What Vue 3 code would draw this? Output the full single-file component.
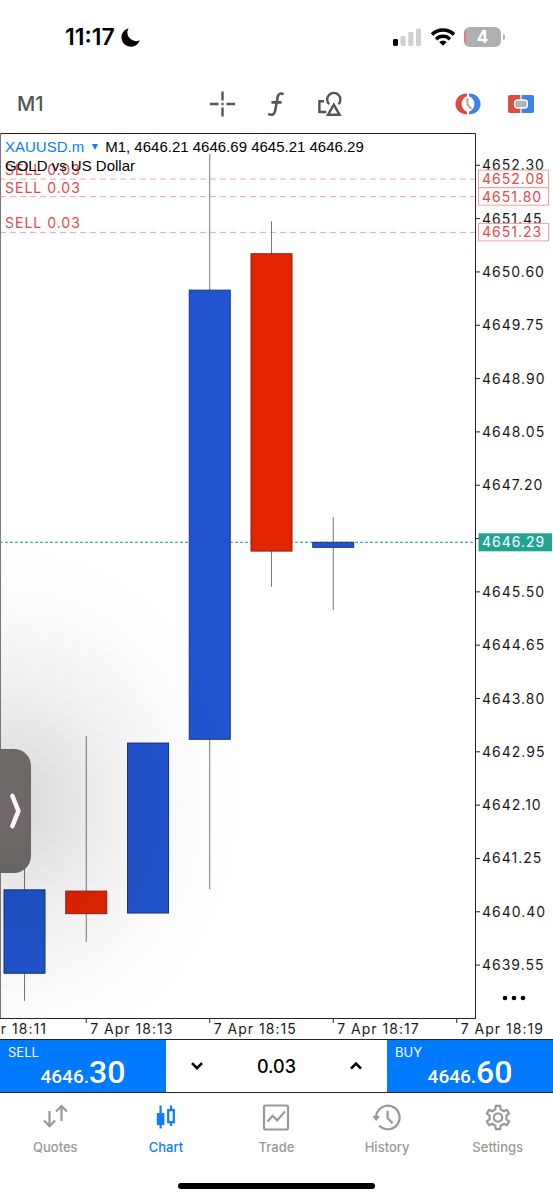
<template>
  <div class="app">
    <div class="status">
      <div class="status-left">
        <span class="clock">11:17</span>
        <svg class="moon" viewBox="0 0 20 20" aria-hidden="true">
          <path d="M7.6 1.2A9.4 9.4 0 1 0 18.8 13.2A8.6 8.6 0 0 1 7.6 1.2Z" fill="#000" />
        </svg>
      </div>
      <div class="status-right">
        <svg class="signal" viewBox="0 0 30 20" aria-hidden="true">
          <rect x="1" y="12" width="5" height="7" rx="1.4" fill="#000" />
          <rect x="8.6" y="9" width="5" height="10" rx="1.4" fill="#d0d0d0" />
          <rect x="16.3" y="5" width="5" height="14" rx="1.4" fill="#d0d0d0" />
          <rect x="24" y="1.5" width="5" height="17.5" rx="1.4" fill="#d0d0d0" />
        </svg>
        <svg class="wifi" viewBox="0 0 26 20" aria-hidden="true">
          <path d="M2 7.6A15.6 15.6 0 0 1 24 7.6" fill="none" stroke="#000" stroke-width="3.6" />
          <path d="M6 12.2A9.8 9.8 0 0 1 20 12.2" fill="none" stroke="#000" stroke-width="3.4" />
          <path d="M13 18.8L9.2 15.1A5.4 5.4 0 0 1 16.8 15.1Z" fill="#000" />
        </svg>
        <div class="battery"><span>4</span></div>
      </div>
    </div>

    <header class="toolbar">
      <button class="timeframe">M1</button>
      <div class="tools">
        <button aria-label="Crosshair">
          <svg viewBox="0 0 26 26" fill="none" stroke="#555" stroke-width="2.4">
            <path d="M13.5 0.5V9.5M13.5 16.5V25.5M1 13H9.5M17.5 13H26M12.4 13H14.6" />
          </svg>
        </button>
        <button aria-label="Indicators">
          <svg viewBox="0 0 26 26" fill="none" stroke="#555" stroke-width="2.6">
            <path d="M20.6 3.2C17.4 1.6 15.3 2.8 14.7 6L12.2 19.6C11.6 23.4 9.2 24.6 5.2 23M8.4 11.4H18.6" />
          </svg>
        </button>
        <button aria-label="Objects">
          <svg viewBox="0 0 26 26" fill="none" stroke="#555" stroke-width="2.4">
            <path d="M7 10.2H2.4V21H9.4" />
            <path d="M12.2 13.2A6.6 6.6 0 1 1 21.4 13.2" />
            <path d="M16.8 13.6L22.6 23.8H11Z" />
          </svg>
        </button>
      </div>
      <div class="actions">
        <button aria-label="Trading session">
          <svg viewBox="0 0 28 24">
            <path d="M13 1.6C-2.4 2-2.4 22 13 22.4V19.8C5.8 17 5.8 7 13 4.2Z" fill="#df4b3e" />
            <path d="M15 1.6C30.4 2 30.4 22 15 22.4V19.8C22.2 17 22.2 7 15 4.2Z" fill="#3b82ee" />
            <path d="M13.4 6.2V12.4L17.6 17" fill="none" stroke="#b3b6b9" stroke-width="2.4" />
          </svg>
        </button>
        <button aria-label="One click trading">
          <svg viewBox="0 0 28 24">
            <path d="M13.4 3H3A2 2 0 0 0 1 5V19A2 2 0 0 0 3 21H13.4Z" fill="#df4b3e" />
            <path d="M14.6 3H25A2 2 0 0 1 27 5V19A2 2 0 0 1 25 21H14.6Z" fill="#3b82ee" />
            <rect x="7.6" y="8" width="12.8" height="8" rx="3" fill="#b3b6b9" stroke="#fff" stroke-width="1.4" />
          </svg>
        </button>
      </div>
    </header>

    <main class="chart">
      <svg class="canvas" viewBox="0 0 553 906" role="img" aria-label="XAUUSD.m M1 candlestick chart">
        <defs>
          <clipPath id="plot"><rect x="0" y="0" width="475" height="885" /></clipPath>
          <radialGradient id="shade">
            <stop offset="0" stop-color="#000" stop-opacity="0.16" />
            <stop offset="0.25" stop-color="#000" stop-opacity="0.1" />
            <stop offset="0.5" stop-color="#000" stop-opacity="0.05" />
            <stop offset="0.75" stop-color="#000" stop-opacity="0.015" />
            <stop offset="1" stop-color="#000" stop-opacity="0" />
          </radialGradient>
        </defs>

        <g v-for="o in orders" :key="o">
          <line class="order-line" x1="0" x2="475" :y1="y(o)" :y2="y(o)" />
          <text class="label order" x="5" :y="y(o) - 4">SELL 0.03</text>
        </g>
        <line class="bid-line" x1="0" x2="475" :y1="y(bid)" :y2="y(bid)" />

        <g v-for="(c, i) in candles" :key="i">
          <line class="wick" :x1="x(i)" :x2="x(i)" :y1="y(c.high)" :y2="y(c.low)" />
          <rect
            :class="c.close >= c.open ? 'up' : 'down'"
            :x="x(i) - 20.5"
            :y="y(Math.max(c.open, c.close))"
            width="41"
            :height="Math.abs(y(c.open) - y(c.close))"
          />
        </g>
        <ellipse cx="10" cy="670" rx="240" ry="265" fill="url(#shade)" clip-path="url(#plot)" />

        <path class="frame" d="M0 0.5H475.5V885" />
        <path class="frame" d="M0 885.5H476" />
        <path class="frame-left" d="M0.5 0V885" />

        <g v-for="p in prices" :key="p">
          <line class="tick" x1="476" x2="480" :y1="y(p)" :y2="y(p)" />
          <text v-if="p !== 4646.35" class="label" x="482" :y="y(p) + 5">{{ p.toFixed(2) }}</text>
        </g>
        <g v-for="o in orders" :key="'tag' + o">
          <rect class="order-tag" x="478.5" :y="y(o) - 9" width="70" height="17.5" />
          <text class="label order" x="482" :y="y(o) + 5">{{ o.toFixed(2) }}</text>
        </g>
        <rect class="bid-tag" x="478.5" :y="y(bid) - 9" width="73.5" height="18" />
        <text class="label bid" x="482" :y="y(bid) + 5">{{ bid.toFixed(2) }}</text>

        <g v-for="(t, i) in times" :key="t">
          <line class="tick" :x1="x(i * 2 - 1)" :x2="x(i * 2 - 1)" y1="886" y2="890" />
          <text class="label" :x="x(i * 2 - 1) + 4" y="901">7 Apr {{ t }}</text>
        </g>
      </svg>

      <div class="legend">
        <div><button class="symbol">XAUUSD.m <svg viewBox="0 0 8 8" aria-hidden="true"><path d="M1 1H7L4 7Z" fill="#0a7cff" /></svg></button>M1, 4646.21 4646.69 4645.21 4646.29</div>
        <div>GOLD vs US Dollar</div>
      </div>

      <button class="handle" aria-label="Show overlay">
        <svg viewBox="0 0 14 36" fill="none" stroke="#fff3f8" stroke-width="4.6" stroke-linecap="round" stroke-linejoin="round">
          <path d="M4.4 3L10.4 18L4.4 33" />
        </svg>
      </button>
      <button class="more" aria-label="More">
        <svg viewBox="0 0 24 6"><circle cx="3" cy="3" r="2.3" /><circle cx="12" cy="3" r="2.3" /><circle cx="21" cy="3" r="2.3" /></svg>
      </button>
    </main>

    <section class="trade">
      <button class="deal">
        <span class="side">SELL</span>
        <span class="price">4646.<b>30</b></span>
      </button>
      <div class="volume">
        <button aria-label="Decrease volume">
          <svg viewBox="0 0 14 10"><path d="M2 2.2L7 7.2L12 2.2" /></svg>
        </button>
        <input v-model="volume" aria-label="Volume" inputmode="decimal" />
        <button aria-label="Increase volume">
          <svg viewBox="0 0 14 10"><path d="M2 7.6L7 2.6L12 7.6" /></svg>
        </button>
      </div>
      <button class="deal">
        <span class="side">BUY</span>
        <span class="price">4646.<b>60</b></span>
      </button>
    </section>

    <nav class="tabs">
      <a href="#quotes">
        <svg viewBox="0 0 30 30"><path d="M9.5 8V23M4 17.6L9.5 23.2L15 17.6M21.5 18V3M16 8.6L21.5 3L27 8.6" /></svg>
        Quotes
      </a>
      <a href="#chart" class="active">
        <svg viewBox="0 0 30 30">
          <path d="M9.6 2.5V25.5M20 2.5V7M20 19V23" />
          <rect x="5.8" y="10" width="7.6" height="12" fill="#0a7cff" stroke="none" />
          <rect x="17.2" y="7.2" width="5.6" height="12" />
        </svg>
        Chart
      </a>
      <a href="#trade">
        <svg viewBox="0 0 30 30">
          <rect x="3" y="2.5" width="24" height="24" rx="1.5" />
          <path d="M6.6 18.4L11.6 12.8L16.2 17.4L24 8.4" />
        </svg>
        Trade
      </a>
      <a href="#history">
        <svg viewBox="0 0 30 30">
          <path d="M4 14.4A11.8 11.8 0 1 1 7.2 22.6" />
          <path d="M1 13.4H7.4L4.2 17.4Z" fill="#999" stroke-width="1" />
          <path d="M15.6 7.8V15L20.6 20.2" />
        </svg>
        History
      </a>
      <a href="#settings">
        <svg viewBox="0 0 30 30">
          <path :d="gear" stroke-linejoin="round" />
          <circle cx="15" cy="14.5" r="4.2" />
        </svg>
        Settings
      </a>
    </nav>
    <div class="home"></div>
  </div>
</template>

<script setup>
import { ref } from "vue";

const volume = ref("0.03");
const bid = 4646.29;
const orders = [4652.08, 4651.8, 4651.23];
const times = ["18:11", "18:13", "18:15", "18:17", "18:19"];

const prices = Array.from({ length: 16 }, (_, i) => Number((4652.3 - i * 0.85).toFixed(2)));

const candles = [
  { open: 4639.42, high: 4642.0, low: 4638.98, close: 4640.75 },
  { open: 4640.73, high: 4643.2, low: 4639.92, close: 4640.37 },
  { open: 4640.38, high: 4643.09, low: 4640.38, close: 4643.09 },
  { open: 4643.15, high: 4652.48, low: 4640.76, close: 4650.31 },
  { open: 4650.89, high: 4651.41, low: 4645.58, close: 4646.15 },
  { open: 4646.21, high: 4646.69, low: 4645.21, close: 4646.29 },
];

// chart coordinates: one candle per minute, 4652.30 is the top grid price
const x = (i) => 24.5 + i * 61.75;
const y = (price) => 32.3 + (4652.3 - price) * 62.73;

function gearPath(cx, cy, teeth) {
  const points = [];
  const step = (Math.PI * 2) / teeth;
  for (let i = 0; i < teeth; i++) {
    const a = i * step - Math.PI / 2;
    [[-0.3, 8.6], [-0.19, 11.8], [0.19, 11.8], [0.3, 8.6]].forEach(([d, r]) => {
      points.push(`${(cx + Math.cos(a + d) * r).toFixed(2)} ${(cy + Math.sin(a + d) * r).toFixed(2)}`);
    });
  }
  return `M${points.join("L")}Z`;
}

const gear = gearPath(15, 14.5, 6);
</script>

<style>
body {
  margin: 0;
  background: #fff;
}
</style>

<style scoped>
.app {
  min-height: 100vh;
  display: flex;
  flex-direction: column;
  background: #fff;
  color: #000;
  font-family: Inter, "Liberation Sans", sans-serif;
}
button {
  border: 0;
  padding: 0;
  background: none;
  color: inherit;
  font: inherit;
}
svg {
  display: block;
}
.status {
  height: 74px;
  display: flex;
  align-items: center;
  justify-content: space-between;
  padding: 0 48px 0 65px;
}
.status-left,
.status-right {
  display: flex;
  align-items: center;
}
.status-left {
  gap: 6px;
}
.status-right {
  gap: 8px;
}
.clock {
  font-size: 23px;
  font-weight: 600;
}
.moon {
  width: 20px;
  height: 20px;
}
.signal {
  width: 30px;
  height: 20px;
}
.wifi {
  width: 26px;
  height: 20px;
}
.battery {
  position: relative;
  width: 37px;
  height: 20px;
  margin-right: 4px;
  border-radius: 6px;
  background: linear-gradient(90deg, #f0727a 2px, #b0b0b0 2px);
  color: #fff;
  font-size: 17px;
  font-weight: 700;
  line-height: 20px;
  text-align: center;
}
.battery::after {
  content: "";
  position: absolute;
  top: 7px;
  right: -4px;
  width: 2px;
  height: 6px;
  border-radius: 0 2px 2px 0;
  background: #b0b0b0;
}
.toolbar {
  height: 59px;
  display: grid;
  grid-template-columns: 1fr auto 1fr;
  align-items: center;
  padding: 0 18px 0 17px;
}
.timeframe {
  justify-self: start;
  color: #555;
  font-size: 20px;
  font-weight: 500;
}
.tools {
  display: flex;
  gap: 28px;
}
.tools svg {
  width: 26px;
  height: 26px;
}
.actions {
  display: flex;
  justify-content: flex-end;
  gap: 25px;
}
.actions svg {
  width: 28px;
  height: 24px;
}
.chart {
  position: relative;
}
.canvas {
  width: 100%;
  height: auto;
}
.label {
  fill: #1a1a1a;
  font-size: 14px;
  letter-spacing: 1px;
}
.label.order {
  fill: #e5484a;
}
.label.bid {
  fill: #fff;
}
.order-line {
  stroke: #f3a5a5;
  stroke-dasharray: 6 4;
}
.bid-line {
  stroke: #2b8f9b;
  stroke-dasharray: 3 2;
}
.wick {
  stroke: #777;
}
.up {
  fill: #2154ce;
  stroke: #1b3580;
}
.down {
  fill: #e22400;
  stroke: #8a2216;
}
.frame,
.tick {
  fill: none;
  stroke: #222;
}
.frame-left {
  stroke: #777;
}
.order-tag {
  fill: none;
  stroke: #f3a0a0;
}
.bid-tag {
  fill: #22a493;
}
.legend {
  position: absolute;
  top: 4px;
  left: 5px;
  font-family: "Liberation Sans", Arial, sans-serif;
  font-size: 15px;
  line-height: 19px;
}
.legend > div {
  display: flex;
}
.symbol {
  display: flex;
  align-items: center;
  gap: 7px;
  margin-right: 6px;
  color: #0a7cff;
}
.symbol svg {
  width: 8px;
  height: 8px;
}
.handle {
  position: absolute;
  top: 68%;
  left: 0;
  width: 31px;
  height: 124px;
  display: flex;
  align-items: center;
  padding-left: 8px;
  border-radius: 0 17px 17px 0;
  background: linear-gradient(#6b6966, #706866 60%, #666462);
}
.handle svg {
  width: 14px;
  height: 36px;
}
.more {
  position: absolute;
  right: 27px;
  bottom: 38px;
}
.more svg {
  width: 24px;
  height: 6px;
}
.trade {
  display: grid;
  grid-template-columns: 3fr 4fr 3fr;
  height: 52px;
  border-top: 1px solid #222;
  border-bottom: 1px solid #222;
}
.deal {
  display: flex;
  flex-direction: column;
  background: #007aff;
  color: #fff;
  text-align: left;
}
.side {
  padding: 4px 0 0 8px;
  font-size: 13px;
  line-height: 16px;
}
.price {
  align-self: center;
  font-family: Roboto, "Liberation Sans", sans-serif;
  font-size: 19px;
  font-weight: 500;
  line-height: 24px;
}
.price b {
  font-size: 32px;
  font-weight: 500;
}
.volume {
  display: grid;
  grid-template-columns: 62px 1fr 62px;
}
.volume button {
  display: grid;
  place-items: center;
}
.volume svg {
  width: 14px;
  height: 10px;
  fill: none;
  stroke: #000;
  stroke-width: 2.6;
}
.volume input {
  min-width: 0;
  border: 0;
  padding: 0;
  background: none;
  color: #000;
  font: 500 18px Inter, sans-serif;
  text-align: center;
}
.tabs {
  display: grid;
  grid-template-columns: repeat(5, 1fr);
  padding-top: 10px;
}
.tabs a {
  display: flex;
  flex-direction: column;
  align-items: center;
  gap: 6px;
  color: #999;
  font-size: 13px;
  font-weight: 500;
  line-height: 16px;
  text-decoration: none;
}
.tabs a.active {
  color: #0a7cff;
}
.tabs svg {
  width: 30px;
  height: 30px;
  fill: none;
  stroke: currentColor;
  stroke-width: 2.2;
}
.home {
  width: 197px;
  height: 6px;
  margin: auto auto 11px;
  border-radius: 3px;
  background: #000;
}
</style>
